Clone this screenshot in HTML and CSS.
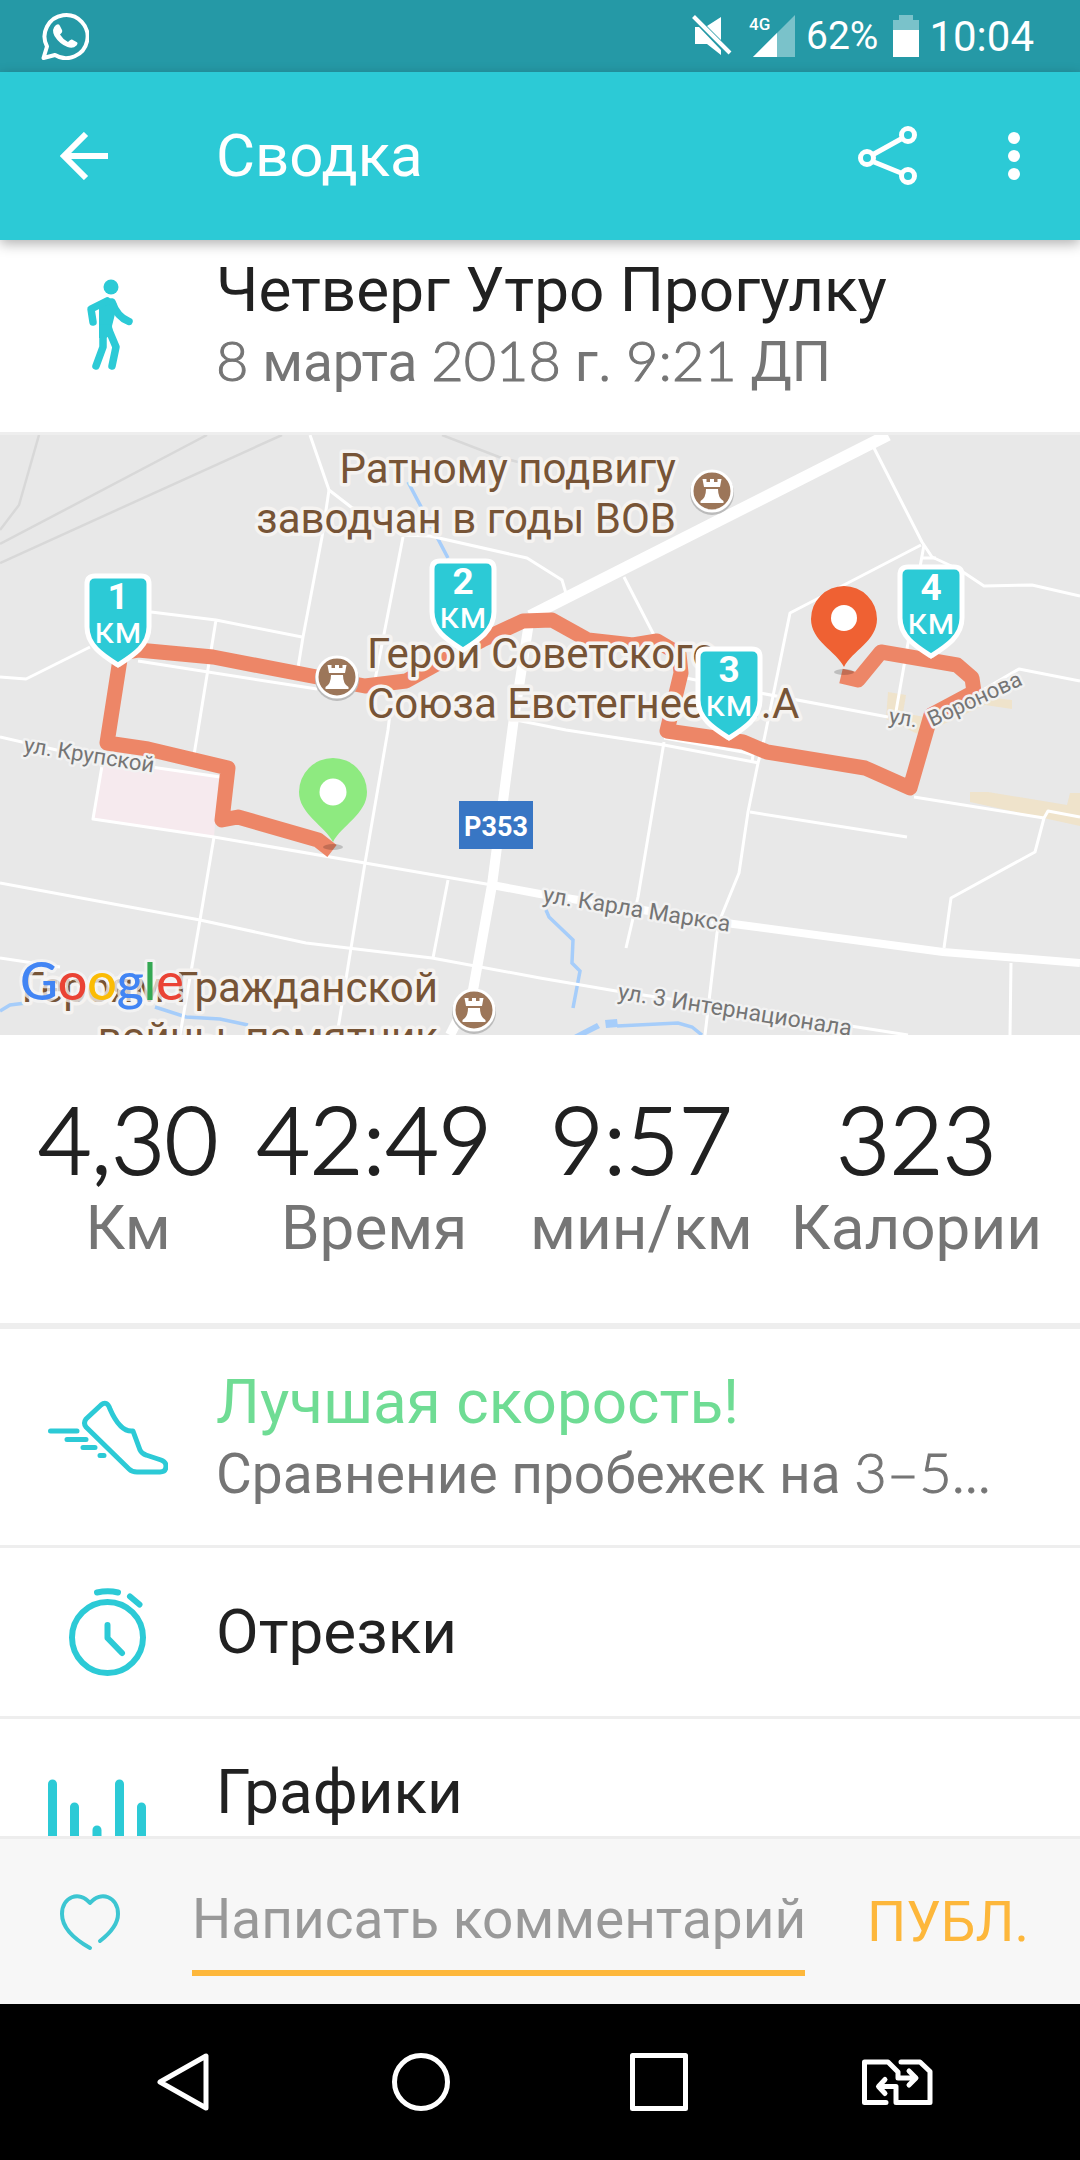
FILE: index.html
```html
<!DOCTYPE html>
<html lang="ru">
<head>
<meta charset="utf-8">
<meta name="viewport" content="width=device-width, initial-scale=1">
<title>Сводка</title>
<link rel="stylesheet" href="styles.css">
</head>
<body>
<div class="app">
  <div class="status">
    <svg class="status-app" width="48" height="48" viewBox="0 0 48 48" aria-hidden="true">
      <path d="M2.500 46 L6 34.500 A21.500 21.500 0 1 1 14 43 Z" fill="none" stroke="#fff" stroke-width="4" stroke-linejoin="round"/>
      <path d="M15 13 q3 -2 4 1 l2 4 q1 2 -2 4.500 q3 5 8 7.500 q2.500 -3 4 -2.500 l4.500 2.500 q2 1 0 3.500 q-3.500 3.500 -9 1.500 q-8 -3 -13 -11 q-3.500 -7 1.500 -11 Z" fill="#fff"/>
    </svg>
    <svg width="40" height="42" viewBox="0 0 40 42" aria-hidden="true">
      <path d="M3 12 H7 L29 35 V40 L15 29 H3 Z M29 2 V25 L15 11 Z" fill="#fff"/>
      <path d="M1.500 1.500 L38 38" stroke="#fff" stroke-width="4"/>
    </svg>
    <svg class="signal" width="47" height="42" viewBox="0 0 47 42" aria-hidden="true">
      <path d="M46 0 V42 H4 Z" fill="#7ac2ca"/>
      <path d="M28 18 V42 H4 Z" fill="#fff"/>
      <text x="0" y="15" class="signal-type">4G</text>
    </svg>
    <span class="status-battery">62%</span>
    <svg class="battery" width="26" height="42" viewBox="0 0 26 42" aria-hidden="true">
      <path d="M6 0 H20 V5 H26 V15 H0 V5 H6 Z" fill="#7ac2ca"/>
      <path d="M0 15 H26 V42 H0 Z" fill="#fff"/>
    </svg>
    <span class="status-time">10:04</span>
  </div>

  <header class="appbar">
    <button class="icon-btn back" aria-label="Назад">
      <svg width="48" height="48" viewBox="0 0 48 48"><path d="M48 24 H4 M26 2 L4 24 L26 46" fill="none" stroke="#fff" stroke-width="6"/></svg>
    </button>
    <h1 class="appbar-title">Сводка</h1>
    <button class="icon-btn share" aria-label="Поделиться">
      <svg width="60" height="60" viewBox="0 0 60 60"><path d="M16 28 L43 13 M16 36 L43 47" stroke="#fff" stroke-width="5"/><g fill="none" stroke="#fff" stroke-width="5"><circle cx="9" cy="32" r="6.500"/><circle cx="50" cy="9" r="6.500"/><circle cx="50" cy="50" r="6.500"/></g></svg>
    </button>
    <button class="icon-btn" aria-label="Ещё">
      <svg width="12" height="48" viewBox="0 0 12 48"><g fill="#fff"><circle cx="6" cy="6" r="6"/><circle cx="6" cy="24" r="6"/><circle cx="6" cy="42" r="6"/></g></svg>
    </button>
  </header>

  <main class="content">
    <section class="row summary">
      <svg class="row-icon" viewBox="0 0 120 120" aria-hidden="true">
        <circle cx="63" cy="21" r="7.500" fill="#2ccad6"/>
        <path d="M51 36 L58 32 Q67 31 69 40 L67 48 L64 60 L65 68 L58 72 L51 72 Z" fill="#2ccad6"/>
        <path d="M59 35 L43 43 L45 56 M64 36 Q69 51 81 55.500 M55 62 V81 L48 100 M60 62 L68 81 L64 100" fill="none" stroke="#2ccad6" stroke-width="7.500" stroke-linecap="round" stroke-linejoin="round"/>
      </svg>
      <div class="row-text">
        <h2 class="row-title">Четверг Утро Прогулку</h2>
        <p class="row-sub"><span class="num">8</span> марта <span class="num">2018</span> г. <span class="num">9:21</span> ДП</p>
      </div>
    </section>

    <section class="map" aria-label="Маршрут">
      <svg class="map-canvas" viewBox="0 0 1080 600" preserveAspectRatio="xMidYMid slice">
        <defs>
          <g id="shield">
            <path d="M-23 3 H23 Q31 3 31 11 V54 C31 73 14 83 0 92 C-14 83 -31 73 -31 54 V11 Q-31 3 -23 3 Z" fill="#2ccad6" stroke="#fff" stroke-width="5"/>
          </g>
          <g id="monument">
            <circle cx="0" cy="2" r="22" fill="#bbb"/>
            <circle r="20" fill="#9c7659" stroke="#fff" stroke-width="3"/>
            <path d="M-9.500 -12 H-5.500 V-9 H-2 V-12 H2 V-9 H5.500 V-12 H9.500 L8 -4 H-8 Z M-6 -2 H6 Q6 7 11.500 10 V12 H-11.500 V10 Q-6 7 -6 -2 Z" fill="#fff"/>
          </g>
        </defs>
        <rect width="1080" height="600" fill="#e8e8e8"/>
        <g fill="none" stroke="#d8d8d8" stroke-width="2.500">
          <path d="M39 0 L19 70 L0 95 M207 0 L0 109 M282 0 L0 128 M442 0 L499 22 L518 27"/>
        </g>
        <path d="M103 325 L219 340 L214 402 L93 384 Z" fill="#f6eaee"/>
        <g fill="#efe3cb">
          <path d="M888 257 L906 260 L903 278 L930 283 L985 262 L1012 265 V274 L985 270 L920 300 L886 284 Z"/>
          <path d="M970 357 H988 L1067 370 L1070 358 H1080 V391 L970 367 Z"/>
        </g>
        <g fill="none" stroke="#a6cdfa" stroke-width="3.500">
          <path d="M408 47 L448 123 M155 572 L186 582 L220 584 L248 590 M0 576 L10 570 L26 568"/>
          <path d="M546 475 L549 482 L573 505 L572 528 L580 536 L573 573 M617 591 L678 588 L692 592 L702 600"/>
        </g>
        <path d="M574 600 L597 588 L600 593 L586 600 Z M605 585 L617 584 L618 592 L606 593 Z" fill="#a6cdfa"/>
        <g fill="none" stroke="#fff" stroke-width="3" stroke-linejoin="round">
          <path d="M310 0 L329 55 L351 72 L403 100 L430 101 L527 123 L562 145 L568 165"/>
          <path d="M329 55 L322 102 L303 202 L296 245 M403 102 L375 245 M391 270 L388 295 L365 428 L351 513 L337 600"/>
          <path d="M151 177 L216 185 L302 202 M216 185 L194 320 M214 402 L200 485 L180 600"/>
          <path d="M0 242 L26 244 L90 212 M138 226 L317 254 M0 302 L100 325"/>
          <path d="M103 325 L93 384 L214 402 L365 428 L492 450 M103 325 L220 342 M448 445 L433 523"/>
          <path d="M0 448 L200 485 L306 508 L432 523 L540 543 L616 556 L857 592 L908 600 M0 523 L60 532"/>
          <path d="M874 13 L922 107 L932 122 L960 135 L984 151 L1032 150 L1080 161"/>
          <path d="M921 110 L790 178 L764 305 L758 328 L748 377 L739 438 L721 482 L717 498 L705 600"/>
          <path d="M924 110 L920 132 L908 208 L895 282 M922 123 H936 M624 142 L657 206 M686 243 L760 258 L888 282"/>
          <path d="M516 285 L566 295 L664 310 L759 328 M664 303 L743 317 L753 320 L752 327 M664 307 L638 462 L626 513"/>
          <path d="M914 362 L1044 383 L1048 376 L1080 382 M1044 383 L1035 417 L951 463 L944 513 M750 377 L907 402"/>
          <path d="M1011 528 L1010 600 M930 286 L1019 234 L1080 246"/>
          <path d="M888 0 L530 181" stroke-width="12"/>
          <path d="M530 181 L513 290 L492 450 L473 555 L450 600" stroke-width="10"/>
          <path d="M492 450 L540 459 L726 488 L943 517 L1080 528" stroke-width="8"/>
        </g>
        <path d="M332 416 L318 405 L238 382 L222 385 L228 333 L148 314 L107 308 L121 218 L138 215 L213 222 L317 242 L365 251 L406 246 L444 225 L482 205 L523 186 L552 185 L588 205 L633 210 L657 206 L679 219 L681 238 L667 296 L743 307 L767 317 L865 333 L910 353 L931 280 L974 257 L972 243 L957 230 L881 217 L858 245 L841 241" fill="none" stroke="#ed8667" stroke-width="15" stroke-linejoin="round"/>

        <g class="place">
          <text x="676" y="48" text-anchor="end">Ратному подвигу</text>
          <text x="676" y="98" text-anchor="end">заводчан в годы ВОВ</text>
          <text x="367" y="233">Герои Советского</text>
          <text x="367" y="283">Союза Евстегнеев ...А</text>
          <text x="438" y="567" text-anchor="end">Героям Гражданской</text>
          <text x="438" y="617" text-anchor="end">войны, памятник</text>
        </g>
        <g class="street">
          <text transform="translate(23 317) rotate(9)">ул. Крупской</text>
          <text class="avenue" transform="translate(542 467) rotate(9)">ул. Карла Маркса</text>
          <text class="avenue" transform="translate(617 564) rotate(9)">ул. 3 Интернационала</text>
          <text transform="translate(888 288) rotate(9)">ул.</text>
          <text transform="translate(932 292) rotate(-25)">Воронова</text>
        </g>
        <use href="#monument" x="712" y="56"/>
        <use href="#monument" x="337" y="242"/>
        <use href="#monument" x="474" y="575"/>
        <rect x="459" y="366" width="74" height="48" fill="#3876c4"/>
        <text class="road" x="496" y="401">P353</text>

        <ellipse cx="333" cy="412" rx="10" ry="3" fill="#000" fill-opacity=".18"/>
        <ellipse cx="844" cy="237" rx="10" ry="3" fill="#000" fill-opacity=".18"/>
        <path d="M333 407 C325 391 299 379 299 357 A34 34 0 0 1 367 357 C367 379 341 391 333 407 Z" fill="#8eea80"/>
        <circle cx="333" cy="357" r="13.500" fill="#fff"/>
        <path d="M844 232 C836 216 811 206 811 184 A33 33 0 0 1 877 184 C877 206 852 216 844 232 Z" fill="#ef6133"/>
        <circle cx="844" cy="183" r="13" fill="#fff"/>

        <g class="km">
          <g transform="translate(118 138)"><use href="#shield"/><text y="36" class="km-num">1</text><text y="70">км</text></g>
          <g transform="translate(463 123)"><use href="#shield"/><text y="36" class="km-num">2</text><text y="70">км</text></g>
          <g transform="translate(729 211)"><use href="#shield"/><text y="36" class="km-num">3</text><text y="70">км</text></g>
          <g transform="translate(931 129)"><use href="#shield"/><text y="36" class="km-num">4</text><text y="70">км</text></g>
        </g>
        <text class="google" x="20" y="565"><tspan fill="#4285f4">G</tspan><tspan fill="#ea4335">o</tspan><tspan fill="#fbbc05">o</tspan><tspan fill="#4285f4">g</tspan><tspan fill="#34a853">l</tspan><tspan fill="#ea4335">e</tspan></text>
      </svg>
    </section>

    <section class="stats">
      <div class="stat"><span class="stat-value">4,30</span><span class="stat-label">Км</span></div>
      <div class="stat"><span class="stat-value">42:49</span><span class="stat-label">Время</span></div>
      <div class="stat"><span class="stat-value">9:57</span><span class="stat-label">мин/км</span></div>
      <div class="stat"><span class="stat-value">323</span><span class="stat-label">Калории</span></div>
    </section>

    <a class="row row-tall" href="#pace">
      <svg class="row-icon" viewBox="0 0 120 120" aria-hidden="true">
        <g fill="none" stroke="#2ccad6" stroke-width="5" stroke-linecap="round" stroke-linejoin="round">
          <path d="M2.500 53 H29 M19 61.500 H38 M35 69.500 H47 M52 77.500 H56"/>
          <path d="M53 27 L38 41 Q35 45 38 49 L81 91 Q84 94 89 94 H112 Q118 94 118 88 Q118 84 113 82 L98 77 Q94 76 92 72 L85 53 C77 54 69 47 62 31 Q59 22 53 27 Z"/>
        </g>
      </svg>
      <div class="row-text">
        <span class="row-title best">Лучшая скорость!</span>
        <span class="row-sub">Сравнение пробежек на <span class="num">3–5...</span></span>
      </div>
    </a>
    <a class="row row-short" href="#splits">
      <svg class="row-icon" viewBox="0 0 120 120" aria-hidden="true">
        <g fill="none" stroke="#2ccad6" stroke-width="6" stroke-linecap="round" stroke-linejoin="round">
          <circle cx="59.500" cy="65.500" r="35.500"/>
          <path d="M59.500 53 V66 L74 81 M49 20.500 Q60 18 70 20.500 M82 24.500 L91.500 32.500"/>
        </g>
      </svg>
      <span class="row-title">Отрезки</span>
    </a>
    <a class="row row-tall row-top" href="#charts">
      <svg class="row-icon" viewBox="0 0 120 120" aria-hidden="true">
        <path d="M4.500 16 V104 M26.500 39 V104 M49 62 V104 M71.500 16 V104 M93.500 39 V104" stroke="#2ccad6" stroke-width="9" stroke-linecap="round"/>
      </svg>
      <span class="row-title">Графики</span>
    </a>
  </main>

  <form class="comment">
    <button class="icon-btn like" type="button" aria-label="Нравится">
      <svg width="64" height="64" viewBox="0 0 64 64"><path d="M32 58 C16 49 4 38 4 24 C4 7 21 0 32 13 C43 0 60 7 60 24 C60 35 51 44 42 51" fill="none" stroke="#3cc6d2" stroke-width="4" stroke-linecap="round" stroke-linejoin="round"/></svg>
    </button>
    <input class="comment-input" type="text" placeholder="Написать комментарий" aria-label="Написать комментарий">
    <button class="publish" type="button">ПУБЛ.</button>
  </form>

  <nav class="navbar">
    <button class="icon-btn nav-btn" aria-label="Назад">
      <svg width="80" height="64" viewBox="0 0 80 64"><path d="M63 6 V58 L17 32 Z" fill="none" stroke="#fff" stroke-width="5" stroke-linejoin="round"/></svg>
    </button>
    <button class="icon-btn nav-btn" aria-label="Домой">
      <svg width="80" height="64" viewBox="0 0 80 64"><circle cx="40" cy="32" r="26.500" fill="none" stroke="#fff" stroke-width="5"/></svg>
    </button>
    <button class="icon-btn nav-btn" aria-label="Недавние">
      <svg width="80" height="64" viewBox="0 0 80 64"><path d="M13.500 5.500 H66.500 V58.500 H13.500 Z" fill="none" stroke="#fff" stroke-width="5" stroke-linejoin="round"/></svg>
    </button>
    <button class="icon-btn nav-btn" aria-label="Сменить SIM-карту">
      <svg width="80" height="64" viewBox="0 0 80 64"><path d="M29 52.500 H7.500 V12 H31 L41 22 V28 H58 M52 21 L59 28 L52 35 M44 12 H63 L73 21.500 V52.500 H39 V36.500 H22 M28 29.500 L21.500 36.500 L28 43.500" fill="none" stroke="#fff" stroke-width="5" stroke-linecap="round" stroke-linejoin="round"/></svg>
    </button>
  </nav>
</div>
</body>
</html>
```

FILE: styles.css
```css
* {
  box-sizing: border-box;
}

body {
  margin: 0;
  font-family: Roboto, "Noto Sans", sans-serif;
  color: #212121;
  background: #fff;
}

.app {
  display: flex;
  flex-direction: column;
  height: 100vh;
}

svg {
  display: block;
  flex: none;
}

button {
  padding: 0;
  border: 0;
  background: none;
  font: inherit;
}

.icon-btn {
  display: flex;
  align-items: center;
  justify-content: center;
}

/* Status bar */
.status {
  display: flex;
  align-items: center;
  height: 72px;
  padding: 0 46px 0 41px;
  background: #2599a6;
  color: #fff;
}

.status-app {
  margin-right: auto;
}

.signal {
  margin: 0 10px 0 17px;
}

.signal-type {
  font-size: 17px;
  font-weight: 500;
  fill: #fff;
}

.status-battery {
  font-size: 39px;
}

.battery {
  margin: 0 10px 0 15px;
}

.status-time {
  font-size: 42px;
}

/* App bar */
.appbar {
  position: relative;
  z-index: 1;
  display: flex;
  align-items: center;
  height: 168px;
  padding: 0 60px;
  background: #2ccad6;
  color: #fff;
  box-shadow: 0 4px 12px rgba(0, 0, 0, .3);
}

.appbar-title {
  flex: 1;
  margin: 0 0 0 108px;
  font-size: 60px;
  font-weight: 400;
  line-height: 72px;
}

.share {
  margin-right: 90px;
}

/* Scrolling content */
.content {
  flex: 1;
  min-height: 0;
  overflow-y: auto;
  scrollbar-width: none;
}

.row {
  display: flex;
  align-items: center;
  border-bottom: 3px solid #eee;
  color: #212121;
  text-decoration: none;
}

.summary {
  padding: 14px 0 34px;
}

.row-tall {
  height: 219px;
  padding-top: 2px;
}

.row-short {
  height: 171px;
}

.row-icon {
  width: 120px;
  height: 120px;
  margin: 0 48px;
}

.row-text {
  flex: 1;
  min-width: 0;
}

.row-title {
  display: block;
  margin: 0;
  font-size: 62px;
  font-weight: 400;
  line-height: 72px;
}

.row-sub {
  display: block;
  margin: 0;
  font-size: 55px;
  line-height: 72px;
  color: #757575;
  white-space: nowrap;
}

.row-top .row-title {
  align-self: flex-start;
  margin-top: 35px;
}

.best {
  color: #6fdc94;
}

.num {
  font-family: Lato, sans-serif;
  font-size: 56px;
  font-weight: 300;
  line-height: 1;
  -webkit-text-stroke: 1px currentColor;
}

/* Map */
.map-canvas {
  width: 100%;
  height: 600px;
}

.place {
  font-size: 42px;
  fill: #775436;
  stroke: #f5f3f1;
  stroke-width: 7px;
  stroke-linejoin: round;
  paint-order: stroke;
}

.street {
  font-size: 22px;
  fill: #757575;
  stroke: #f2f2f2;
  stroke-width: 5px;
  stroke-linejoin: round;
  paint-order: stroke;
}

.avenue {
  font-size: 23px;
}

.road {
  font-size: 27px;
  font-weight: 700;
  fill: #fff;
  text-anchor: middle;
}

.km {
  font-size: 37px;
  fill: #fff;
  text-anchor: middle;
}

.km-num {
  font-weight: 700;
}

.google {
  font-family: Lato, sans-serif;
  font-size: 52px;
  font-weight: 500;
  stroke: rgba(245, 245, 245, .75);
  stroke-width: 6px;
  stroke-linejoin: round;
  paint-order: stroke;
}

/* Totals */
.stats {
  display: flex;
  justify-content: space-between;
  padding: 51px 38px 59px;
  border-bottom: 6px solid #eee;
}

.stat {
  display: flex;
  flex-direction: column;
  align-items: center;
}

.stat-value {
  font-family: Lato, sans-serif;
  font-size: 92px;
  font-weight: 300;
  line-height: 106px;
  -webkit-text-stroke: 2px currentColor;
}

.stat-label {
  font-size: 62px;
  line-height: 72px;
  color: #757575;
}

/* Comment bar */
.comment {
  display: flex;
  align-items: center;
  height: 168px;
  padding: 0 51px 0 58px;
  border-top: 3px solid #ededed;
  background: #f7f7f7;
}

.comment-input {
  flex: 1;
  min-width: 0;
  height: 108px;
  margin: 0 62px 0 70px;
  padding: 0;
  border: 0;
  border-bottom: 6px solid #fdb73b;
  border-radius: 0;
  outline: 0;
  background: none;
  font: inherit;
  font-size: 55px;
  color: #212121;
}

.comment-input::placeholder {
  color: #999;
  opacity: 1;
}

.publish {
  font-size: 55px;
  color: #fdb73b;
}

/* System navigation */
.navbar {
  display: flex;
  height: 156px;
  padding: 0 64px;
  background: #000;
}

.nav-btn {
  flex: 1;
}
```
